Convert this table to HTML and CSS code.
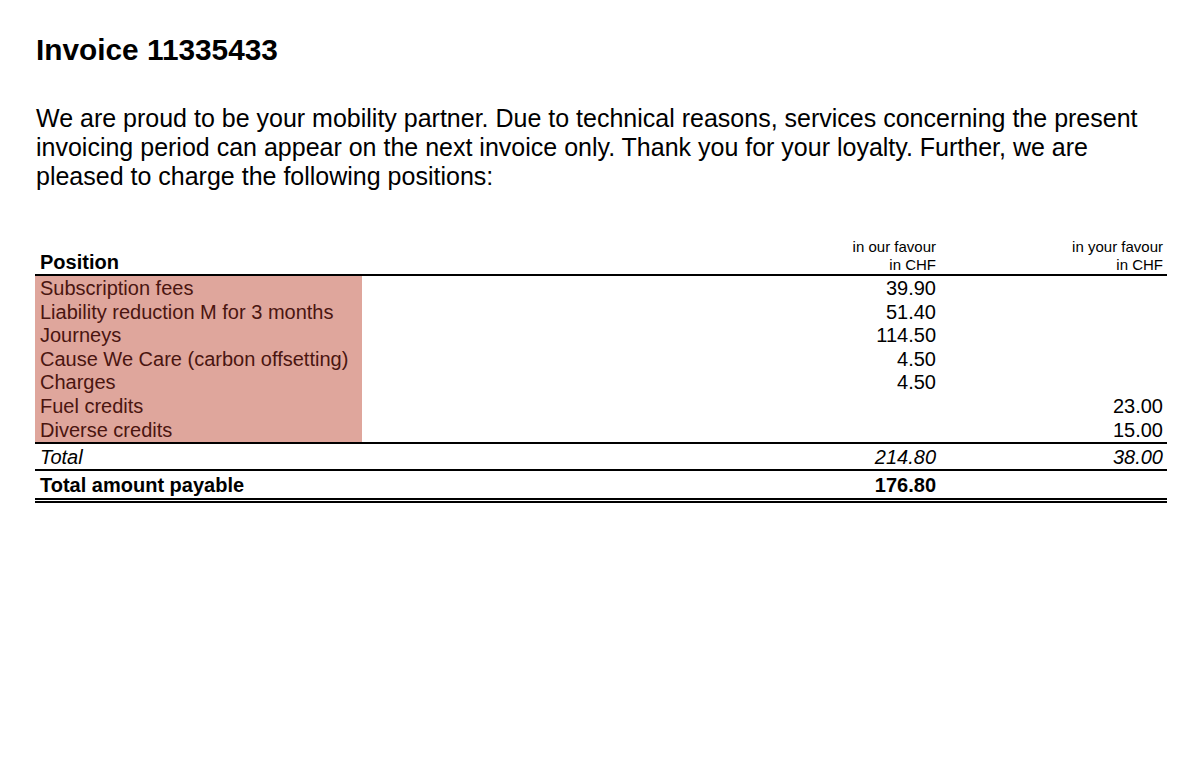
FILE: index.html
```html
<!DOCTYPE html>
<html lang="en">
<head>
<meta charset="utf-8">
<title>Invoice 11335433</title>
<link rel="stylesheet" href="styles.css">
</head>
<body>
<main class="page">
  <h1 class="title">Invoice 11335433</h1>
  <p class="intro">We are proud to be your mobility partner. Due to technical reasons, services concerning the present invoicing period can appear on the next invoice only. Thank you for your loyalty. Further, we are pleased to charge the following positions:</p>

  <section class="table">
    <div class="row head">
      <div class="cell pos">Position</div>
      <div class="cell num small">in our favour<br>in CHF</div>
      <div class="cell num small last">in your favour<br>in CHF</div>
    </div>
    <div class="body">
      <div class="row item"><div class="cell pos hl">Subscription fees</div><div class="cell num">39.90</div><div class="cell num last"></div></div>
      <div class="row item"><div class="cell pos hl">Liability reduction M for 3 months</div><div class="cell num">51.40</div><div class="cell num last"></div></div>
      <div class="row item"><div class="cell pos hl">Journeys</div><div class="cell num">114.50</div><div class="cell num last"></div></div>
      <div class="row item"><div class="cell pos hl">Cause We Care (carbon offsetting)</div><div class="cell num">4.50</div><div class="cell num last"></div></div>
      <div class="row item"><div class="cell pos hl">Charges</div><div class="cell num">4.50</div><div class="cell num last"></div></div>
      <div class="row item"><div class="cell pos hl">Fuel credits</div><div class="cell num"></div><div class="cell num last">23.00</div></div>
      <div class="row item"><div class="cell pos hl">Diverse credits</div><div class="cell num"></div><div class="cell num last">15.00</div></div>
    </div>
    <div class="row subtotal">
      <div class="cell pos">Total</div>
      <div class="cell num">214.80</div>
      <div class="cell num last">38.00</div>
    </div>
    <div class="row grand">
      <div class="cell pos">Total amount payable</div>
      <div class="cell num">176.80</div>
      <div class="cell num last"></div>
    </div>
  </section>
</main>
</body>
</html>
```

FILE: styles.css
```css
html, body {
  margin: 0;
  padding: 0;
  background: #ffffff;
}

body {
  font-family: "Liberation Sans", Arial, sans-serif;
  color: #000000;
}

.page {
  padding: 33px 33px 0 35px;
  width: 1132px;
}

.title {
  margin: 0;
  font-size: 29.8px;
  line-height: 34px;
  font-weight: bold;
  padding-left: 1px;
}

.intro {
  margin: 37px 0 0 0;
  font-size: 25px;
  line-height: 29px;
  padding-left: 1px;
}

.table {
  margin-top: 47px;
  font-size: 20px;
}

.row {
  display: grid;
  grid-template-columns: 327px 1fr 231px;
}

.cell {
  line-height: 23.8px;
  white-space: nowrap;
}

.pos {
  padding-left: 5px;
}

.num {
  text-align: right;
}

.num.last {
  padding-right: 4px;
}

.head {
  border-bottom: 2.5px solid #000;
  align-items: end;
}

.head .pos {
  font-weight: bold;
  line-height: 23px;
}

.small {
  font-size: 15px;
  line-height: 18px;
}

.body {
  display: flex;
  flex-direction: column;
  border-bottom: 2px solid #000;
}

.item .cell {
  line-height: 23.6px;
}

.item:first-child .cell {
  padding-top: 1px;
}

.hl {
  background: #dfa69c;
  color: #4a1510;
}

.subtotal {
  font-style: italic;
  border-bottom: 2px solid #000;
}

.subtotal .cell {
  line-height: 24px;
  padding-top: 1px;
}

.grand {
  font-weight: bold;
  border-bottom: 5px double #000;
}

.grand .cell {
  line-height: 26px;
  padding-top: 1px;
}
```
